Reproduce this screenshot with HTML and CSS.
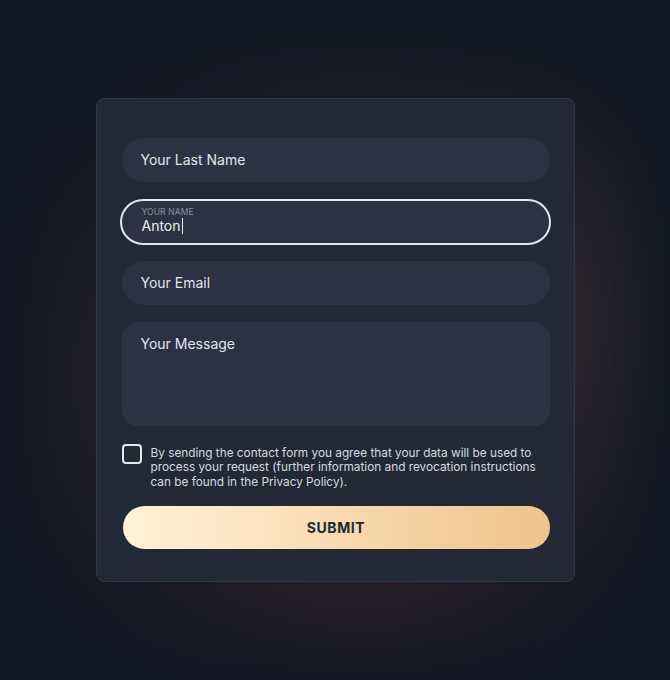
FILE: index.html
```html
<!DOCTYPE html>
<html lang="en">
<head>
<meta charset="utf-8">
<title>Contact form</title>
<link rel="stylesheet" href="styles.css">
</head>
<body>
<main class="stage">
  <form class="card">
    <div class="field">
      <span class="placeholder">Your Last Name</span>
    </div>
    <div class="field field--focus">
      <span class="float-label">YOUR NAME</span>
      <span class="value">Anton<span class="caret"></span></span>
    </div>
    <div class="field">
      <span class="placeholder">Your Email</span>
    </div>
    <div class="field field--area">
      <span class="placeholder">Your Message</span>
    </div>
    <label class="consent">
      <span class="checkbox"></span>
      <span class="consent-text">By sending the contact form you agree that your data will be used to process your request (further information and revocation instructions can be found in the Privacy Policy).</span>
    </label>
    <button type="button" class="submit">SUBMIT</button>
  </form>
</main>
</body>
</html>
```

FILE: styles.css
```css
* { box-sizing: border-box; }

html, body {
  margin: 0;
  padding: 0;
  height: 100%;
}

body {
  background: #131826;
  font-family: "Inter", "Noto Sans", sans-serif;
  color: #e2e4eb;
}

.stage {
  width: 670px;
  height: 680px;
  display: flex;
  align-items: center;
  justify-content: center;
}

.card {
  position: relative;
  width: 479px;
  height: 484px;
  background: #222836;
  border: 1px solid #2f3544;
  border-radius: 8px;
  padding: 39px 24px 31px 25px;
  display: flex;
  flex-direction: column;
}

.card::before {
  content: "";
  position: absolute;
  inset: -30px -40px -50px -40px;
  z-index: -1;
  border-radius: 120px;
  background:
    radial-gradient(ellipse at 100% 45%, rgba(210, 130, 90, 0.55), transparent 60%),
    radial-gradient(ellipse at 55% 100%, rgba(200, 70, 70, 0.45), transparent 60%),
    radial-gradient(ellipse at 0% 55%, rgba(190, 110, 80, 0.3), transparent 60%),
    radial-gradient(ellipse at 50% 0%, rgba(190, 120, 90, 0.2), transparent 60%);
  filter: blur(40px);
  opacity: 0.32;
}

.field {
  height: 43.5px;
  border-radius: 22px;
  background: #2c3244;
  padding: 0 19px;
  display: flex;
  align-items: center;
  font-size: 14px;
  color: #e2e4eb;
  margin-bottom: 17px;
}

.field--focus {
  height: 46.5px;
  margin: 0 -1.5px 16px;
  padding: 0 19.5px;
  border: 2px solid #e1e5f2;
  border-radius: 24px;
  flex-direction: column;
  align-items: flex-start;
  justify-content: center;
}

.float-label {
  font-size: 8.5px;
  letter-spacing: 0.1px;
  color: #8b91a1;
  line-height: 10px;
  margin-top: -2px;
}

.value {
  font-size: 14px;
  line-height: 17px;
  color: #eef0f5;
  display: flex;
  align-items: center;
}

.caret {
  display: inline-block;
  width: 1px;
  height: 16px;
  background: #eef0f5;
  margin-left: 1px;
}

.field--area {
  height: 104px;
  border-radius: 16px;
  align-items: flex-start;
  padding-top: 13px;
  margin-bottom: 18px;
}

.consent {
  display: flex;
  align-items: flex-start;
  gap: 9px;
  margin-bottom: 16px;
}

.checkbox {
  flex: none;
  width: 20px;
  height: 20px;
  border: 2px solid #e3e6ee;
  border-radius: 4px;
  margin-top: 0;
}

.consent-text {
  font-size: 11.8px;
  line-height: 14.7px;
  color: #d8dae2;
  padding-top: 2px;
}

.submit {
  height: 43.5px;
  border: 0;
  border-radius: 22px;
  background: linear-gradient(90deg, #fff2d6 0%, #fbe3bf 35%, #f4d09f 70%, #efc48c 100%);
  font-family: "Inter", "Noto Sans", sans-serif;
  font-weight: 700;
  font-size: 14px;
  letter-spacing: 0.6px;
  color: #222836;
  cursor: pointer;
  margin-left: 1px;
}
```
